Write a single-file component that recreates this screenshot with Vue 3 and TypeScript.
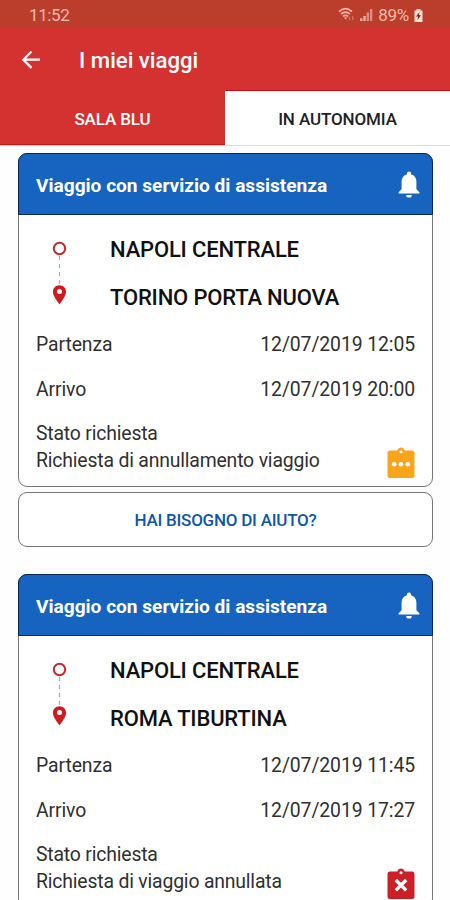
<script setup lang="ts">
interface Trip {
  id: number
  from: string
  to: string
  departure: string
  arrival: string
  status: string
  state: 'pending' | 'cancelled'
}

const trips: Trip[] = [
  {
    id: 1,
    from: 'NAPOLI CENTRALE',
    to: 'TORINO PORTA NUOVA',
    departure: '12/07/2019 12:05',
    arrival: '12/07/2019 20:00',
    status: 'Richiesta di annullamento viaggio',
    state: 'pending',
  },
  {
    id: 2,
    from: 'NAPOLI CENTRALE',
    to: 'ROMA TIBURTINA',
    departure: '12/07/2019 11:45',
    arrival: '12/07/2019 17:27',
    status: 'Richiesta di viaggio annullata',
    state: 'cancelled',
  },
]
</script>

<template>
  <div class="screen">
    <div class="statusbar">
      <span class="clock">11:52</span>
      <div class="indicators">
        <svg class="wifi" width="18" height="16" viewBox="0 0 18 16">
          <g fill="none" stroke="#f0b5a4" stroke-width="1.7">
            <path d="M1 4.600Q7.500-1.200 14 4.600" />
            <path d="M3 7.100Q7.500 3 12 7.100" />
            <path d="M5 9.400Q7.500 7.200 10 9.400" />
          </g>
          <path d="M5.800 10.400h3.400L7.500 12.600z" fill="#f0b5a4" />
          <path d="M11.600 13.500V9.800l-1.300 1.500M14.600 9v3.700l1.400-1.500" fill="none" stroke="#e0745f" stroke-width="1" />
        </svg>
        <svg class="signal" width="13" height="13" viewBox="0 0 13 13">
          <path d="M0 10.200h2.400V13H0zM3.300 8h2.400v5H3.300z" fill="#efb09f" />
          <path d="M6.600 4.600H9V13H6.600zM9.900 1h2.400v12H9.900z" fill="#df8d7c" />
        </svg>
        <span class="percent">89%</span>
        <svg class="battery" width="9" height="13" viewBox="0 0 9 13">
          <path d="M2.500 0h4v1.500H8.500V13h-8V1.500h2z" fill="#fbdcd3" />
          <path d="M5.500 3L2 7.600h2.200L3.500 11 7 6.300H4.800z" fill="#6b2119" />
        </svg>
      </div>
    </div>

    <header class="appbar">
      <svg width="20" height="20" viewBox="0 0 20 20">
        <path d="M10.500 1.500L2.300 9.700l8.200 8.200M2.500 9.700H19" fill="none" stroke="#fff" stroke-width="2.200" />
      </svg>
      <h1>I miei viaggi</h1>
    </header>

    <nav class="tabs">
      <div class="tab active"><span>SALA BLU</span></div>
      <div class="tab idle"><span>IN AUTONOMIA</span></div>
    </nav>

    <main class="list">
      <section v-for="trip in trips" :key="trip.id" class="trip">
        <article class="card">
          <div class="card-head">
            <h2>Viaggio con servizio di assistenza</h2>
            <svg width="22" height="27" viewBox="0 0 22 27">
              <path
                d="M11 0.500c1.200 0 2 .8 2 1.900v.8c3.500.9 5.400 3.800 5.400 7.400v7.600l3 3v1.400H.6v-1.400l3-3v-7.600C3.600 7 5.500 4.100 9 3.200v-.8C9 1.300 9.800.5 11 .5z"
                fill="#fff"
              />
              <path d="M8.200 24h5.600a2.800 2.600 0 0 1-5.600 0z" fill="#fff" />
            </svg>
          </div>

          <div class="card-body">
            <div class="route">
              <svg width="16" height="68" viewBox="0 0 16 68">
                <circle cx="8.500" cy="8.500" r="5.700" fill="none" stroke="#c72a2b" stroke-width="2" />
                <path d="M8.500 16v28" stroke="#aaa" stroke-width="1.200" stroke-dasharray="4 4" />
                <path
                  d="M8.500 45.200c3.800 0 6.600 2.900 6.600 6.500 0 4.700-6.600 12.500-6.600 12.500s-6.600-7.800-6.600-12.500c0-3.600 2.800-6.500 6.600-6.500z"
                  fill="#cf1b20"
                />
                <circle cx="8.500" cy="51.600" r="2.500" fill="#fff" />
              </svg>
              <div class="stations">
                <strong>{{ trip.from }}</strong>
                <strong>{{ trip.to }}</strong>
              </div>
            </div>

            <div class="row">
              <span>Partenza</span>
              <span>{{ trip.departure }}</span>
            </div>
            <div class="row">
              <span>Arrivo</span>
              <span>{{ trip.arrival }}</span>
            </div>

            <div class="state">
              <div class="state-text">
                <span>Stato richiesta</span>
                <span>{{ trip.status }}</span>
              </div>
              <svg width="28" height="32" viewBox="0 0 28 32">
                <path
                  :fill="trip.state === 'pending' ? '#f9a51a' : '#cb2027'"
                  d="M3 3.500h7.300C10.900 1.500 12.300.5 14 .5s3.100 1 3.700 3H25A2.500 2.500 0 0 1 27.500 6v22.500A2.500 2.500 0 0 1 25 31H3A2.500 2.500 0 0 1 .5 28.500V6A2.500 2.500 0 0 1 3 3.500z"
                />
                <circle cx="14" cy="4.800" r="1.500" fill="#fff" />
                <g v-if="trip.state === 'pending'" fill="#fff">
                  <circle cx="7.200" cy="17.300" r="2.300" />
                  <circle cx="14" cy="17.300" r="2.300" />
                  <circle cx="20.800" cy="17.300" r="2.300" />
                </g>
                <path v-else d="M8.800 12l10.400 10.400M19.200 12L8.800 22.400" stroke="#fff" stroke-width="3.400" />
              </svg>
            </div>
          </div>
        </article>

        <button v-if="trip.state === 'pending'" class="help" type="button">HAI BISOGNO DI AIUTO?</button>
      </section>
    </main>
  </div>
</template>

<style>
body {
  margin: 0;
  background: #fff;
}
</style>

<style scoped>
.screen {
  width: 450px;
  height: 900px;
  overflow: hidden;
  background: #fefefe;
  font-family: Roboto, "Liberation Sans", sans-serif;
  color: #303030;
}
.screen svg {
  display: block;
  flex: none;
}
.screen span,
.screen strong,
.screen h2 {
  white-space: nowrap;
}
.statusbar {
  box-sizing: border-box;
  height: 28px;
  padding: 2px 27px 0 29px;
  display: flex;
  justify-content: space-between;
  align-items: center;
  background: #bb3e2c;
  color: #f3b9a9;
  font-size: 17px;
}
.clock {
  letter-spacing: -0.4px;
}
.indicators {
  display: flex;
  align-items: center;
}
.wifi {
  margin-right: 2px;
  margin-top: -1px;
}
.signal {
  margin: -1px 5px 0 2px;
}
.percent {
  letter-spacing: -0.3px;
  margin-right: 5px;
}
.appbar {
  box-sizing: border-box;
  height: 62px;
  padding: 2px 0 0 21px;
  display: flex;
  align-items: center;
  gap: 38px;
  background: #d43230;
}
.appbar svg {
  margin-top: -1px;
}
h1 {
  margin: 0;
  color: #fff;
  font-size: 22.2px;
  font-weight: 500;
}
.tabs {
  height: 56px;
  display: flex;
}
.tab {
  box-sizing: border-box;
  display: flex;
  flex: 1;
  align-items: center;
  justify-content: center;
  padding: 2px 0 0;
  font-size: 17px;
  font-weight: 500;
  letter-spacing: -0.12px;
}
.active {
  background: #d43230;
  color: #fff;
  border-bottom: 1px solid #ffb8b8;
  box-shadow: inset 0 -1px #c41a18;
}
.idle {
  background: #fff;
  color: #222;
  border-bottom: 1px solid #ddd;
  box-shadow: inset 0 1px #c40d0d;
}
.list {
  padding: 7px 17px 0 18px;
}
.trip {
  display: flex;
  flex-direction: column;
  gap: 5px;
  margin-bottom: 27px;
}
.card {
  box-sizing: border-box;
  height: 334px;
  border: 1.5px solid #777;
  border-radius: 9px;
  background: #fff;
}
.card-head {
  box-sizing: border-box;
  height: 62px;
  margin: -1px -1px 0;
  padding: 0 12px 0 17px;
  display: flex;
  align-items: center;
  justify-content: space-between;
  border: 1px solid #07265c;
  border-radius: 9px 9px 0 0;
  background: #1764c0;
}
h2 {
  margin: 2px 0 0;
  color: #fff;
  font-size: 19.1px;
  font-weight: 700;
}
.card-body {
  padding: 0 17px;
}
.route {
  display: flex;
  gap: 43px;
  padding: 25px 0 0 15px;
  height: 68px;
}
.stations {
  display: flex;
  flex-direction: column;
  margin-top: -3px;
}
.stations strong {
  flex: none;
  height: 48px;
  line-height: 26px;
  color: #111;
  font-size: 22px;
  font-weight: 500;
  letter-spacing: -0.17px;
}
.row {
  height: 45px;
  line-height: 45px;
  display: flex;
  justify-content: space-between;
  font-size: 19.4px;
  letter-spacing: -0.1px;
}
.row:nth-child(2) {
  margin-top: 14px;
}
.state {
  display: flex;
  justify-content: space-between;
  align-items: flex-end;
  font-size: 19.4px;
  letter-spacing: -0.18px;
}
.state-text {
  display: flex;
  flex-direction: column;
  line-height: 27px;
  padding: 8px 0 5px;
}
.help {
  box-sizing: border-box;
  height: 55px;
  margin: 0;
  padding: 1px 0 0;
  border: 1.5px solid #777;
  border-radius: 9px;
  background: #fff;
  color: #0d57a8;
  font-family: inherit;
  font-size: 17px;
  font-weight: 500;
  letter-spacing: -0.24px;
}
</style>
